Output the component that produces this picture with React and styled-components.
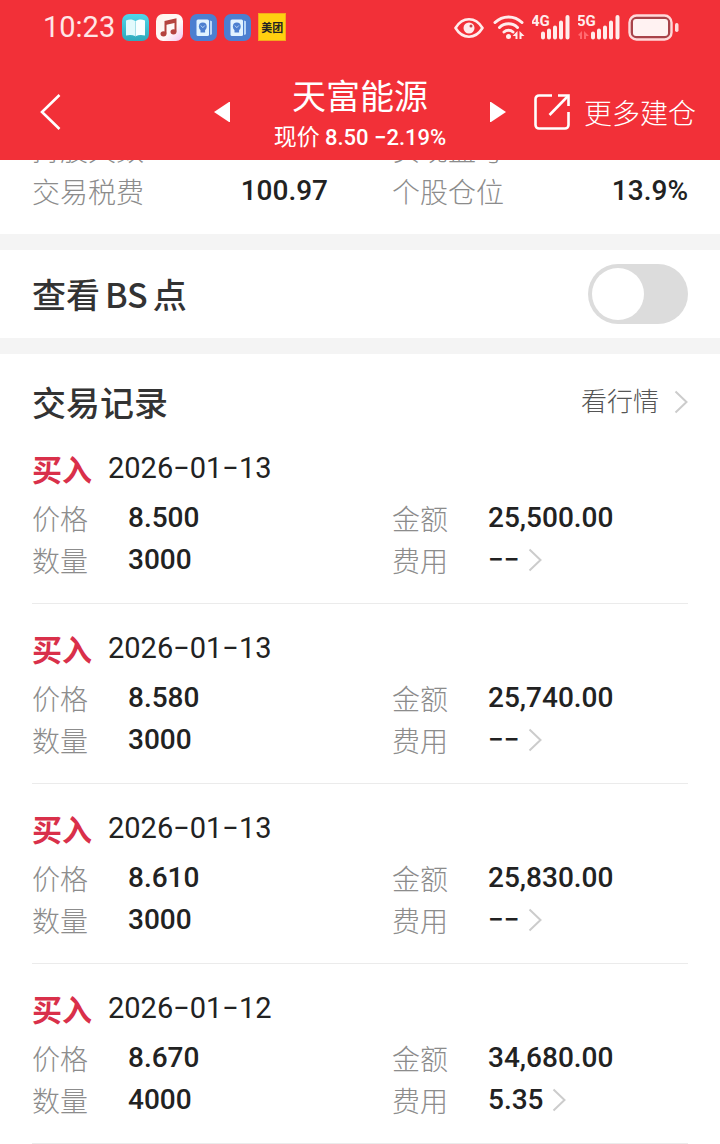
import React, { useState } from "react";
import styled, { createGlobalStyle } from "styled-components";

const records = [
  { id: 1, date: "2026−01−13", price: "8.500", count: "3000", amount: "25,500.00", fee: "−−" },
  { id: 2, date: "2026−01−13", price: "8.580", count: "3000", amount: "25,740.00", fee: "−−" },
  { id: 3, date: "2026−01−13", price: "8.610", count: "3000", amount: "25,830.00", fee: "−−" },
  { id: 4, date: "2026−01−12", price: "8.670", count: "4000", amount: "34,680.00", fee: "5.35" },
];

const BookIcon = () => (
  <svg width="27" height="27" viewBox="0 0 27 27" aria-hidden="true">
    <defs>
      <linearGradient id="book" x1="0" y1="0" x2="0" y2="1">
        <stop offset="0" stopColor="#4fd6ea" />
        <stop offset="1" stopColor="#2fa9bb" />
      </linearGradient>
    </defs>
    <rect width="27" height="27" rx="7" fill="url(#book)" />
    <path d="M4 6.500c3.500-1.400 6.800-1.200 9.500.8v15c-3-1.600-6-1.800-9.500-.8z" fill="#e2fafc" />
    <path d="M23 6.500c-3.500-1.400-6.800-1.200-9.500.8v15c3-1.600 6-1.800 9.500-.8z" fill="#f8ffff" />
    <path d="M13.500 7.300v15" stroke="#a5dfe8" strokeWidth="1" />
  </svg>
);

const MusicIcon = () => (
  <svg width="27" height="27" viewBox="0 0 27 27" aria-hidden="true">
    <defs>
      <linearGradient id="music" x1="0" y1="0" x2="1" y2="1">
        <stop offset="0" stopColor="#fff3ea" />
        <stop offset="0.6" stopColor="#fffafa" />
        <stop offset="1" stopColor="#f3c4ee" />
      </linearGradient>
    </defs>
    <rect width="27" height="27" rx="7" fill="url(#music)" />
    <path d="M9.500 19.500V7.800L19.500 5.500v12" fill="none" stroke="#b5443f" strokeWidth="2" />
    <path d="M9.500 7.500l10-2.300v3.600l-10 2.300z" fill="#b5443f" />
    <ellipse cx="7.500" cy="19.800" rx="3" ry="2.600" fill="#b5443f" />
    <ellipse cx="17.500" cy="17.800" rx="3" ry="2.600" fill="#b5443f" />
  </svg>
);

const CardIcon = () => (
  <svg width="27" height="27" viewBox="0 0 27 27" aria-hidden="true">
    <rect width="27" height="27" rx="7" fill="#4c7fd0" />
    <path d="M20 6.500l2 .8v13l-2 .7z" fill="#b8d6f8" />
    <rect x="6.500" y="5.500" width="12.500" height="16.500" rx="1.500" fill="#e2f3ff" />
    <circle cx="12.800" cy="12.500" r="3.900" fill="#4c7fd0" />
    <path d="M10.500 14.500h4.600v4h-4.600z" fill="#4c7fd0" />
    <path d="M10.800 11.500l2 2.200 2-2.200" fill="none" stroke="#b8d6f8" strokeWidth="1" />
  </svg>
);

const EyeIcon = () => (
  <svg width="32" height="26" viewBox="0 0 32 26" aria-hidden="true">
    <path
      d="M1.500 14C5 8.300 9.700 5.300 15 5.300S25 8.300 28.500 14C25 19.700 20.300 22.700 15 22.700S5 19.700 1.500 14z"
      fill="none"
      stroke="#ffecec"
      strokeWidth="2.600"
      strokeLinejoin="round"
    />
    <circle cx="15" cy="14" r="5.500" fill="#ffecec" />
    <circle cx="17" cy="12" r="1.500" fill="#c6434a" />
  </svg>
);

const WifiIcon = () => (
  <svg width="32" height="26" viewBox="0 0 32 26" aria-hidden="true">
    <g fill="none" stroke="#ffecec" strokeWidth="3" strokeLinecap="round">
      <path d="M2 8.500C9.500 1 21.500 1 29 8.500" />
      <path d="M6.500 13.500c5-5 13-5 18 0" />
      <path d="M11 18c2.500-2.300 6.500-2.300 9 0" />
    </g>
    <circle cx="15.500" cy="22.500" r="2.500" fill="#ffecec" />
    <path d="M24.500 17v8h-2v-3h-3zM26.500 17v8h2v-3h3z" fill="#ffecec" />
  </svg>
);

const SignalIcon = ({ label, idle }) => (
  <svg width={idle ? 43 : 39} height="28" viewBox={idle ? "0 0 43 28" : "0 0 39 28"} role="img" aria-label={label}>
    <text x="-1" y="13" fontFamily="Roboto, sans-serif" fontSize="15" fontWeight="700" fill="#ffecec">
      {label}
    </text>
    <g transform={idle ? "translate(4 0)" : undefined} stroke="#ffecec" strokeWidth="4" strokeLinecap="round">
      <path d="M11 20.500v4M17 17.500v7M23 14.500v10M29 9.500v15M35.500 4v20.500" />
    </g>
    {idle && <path d="M0 22l4-4v8h-2v-3zM6 18v8h2v-3h3z" fill="#ff6a70" />}
  </svg>
);

const BatteryIcon = () => (
  <svg width="51" height="27" viewBox="0 0 51 27" aria-hidden="true">
    <rect x="1.500" y="1.500" width="42" height="24" rx="7" fill="#a8434a" stroke="#ffd9da" strokeWidth="2.400" />
    <rect x="5" y="5" width="35" height="17" rx="3" fill="#fff2f2" />
    <rect x="47" y="9" width="3.500" height="9" rx="1.700" fill="#ffd9da" />
  </svg>
);

const BackIcon = () => (
  <svg width="21" height="36" viewBox="0 0 21 36" aria-hidden="true">
    <path d="M19.500 1L2 18l17.500 17" fill="none" stroke="#fff" strokeWidth="2.600" />
  </svg>
);

const Triangle = ({ flip }) => (
  <svg width="16" height="20" viewBox="0 0 16 20" aria-hidden="true">
    <path d={flip ? "M1 0L16 10 1 20H0V0z" : "M15 0L0 10l15 10h1V0z"} fill="#fff" />
  </svg>
);

const ShareIcon = () => (
  <svg width="36" height="36" viewBox="0 0 36 36" aria-hidden="true">
    <g fill="none" stroke="#fff" strokeWidth="2.600">
      <path d="M18 1.500H5A3.500 3.500 0 0 0 1.500 5v26A3.500 3.500 0 0 0 5 34.500h26a3.500 3.500 0 0 0 3.500-3.500V18" />
      <path d="M15.500 21L34 2" />
      <path d="M24 1.500h10.500V12" />
    </g>
  </svg>
);

const Chevron = () => (
  <svg width="14" height="24" viewBox="0 0 14 24" aria-hidden="true">
    <path d="M1.500 1.500L12.500 12 1.500 22.500" fill="none" stroke="#ccc" strokeWidth="2" />
  </svg>
);

const StatusBar = () => (
  <Status>
    <StatusGroup>
      <Time>10:23</Time>
      <BookIcon />
      <MusicIcon />
      <CardIcon />
      <CardIcon />
      <Meituan>美团</Meituan>
    </StatusGroup>
    <StatusGroup>
      <EyeIcon />
      <WifiIcon />
      <SignalIcon label="4G" />
      <SignalIcon label="5G" idle />
      <BatteryIcon />
    </StatusGroup>
  </Status>
);

const Header = () => (
  <Nav>
    <BackBtn aria-label="返回">
      <BackIcon />
    </BackBtn>
    <Switcher>
      <IconBtn aria-label="上一只">
        <Triangle />
      </IconBtn>
      <Stock>
        <StockName>天富能源</StockName>
        <StockPrice>
          现价 <span>8.50 −2.19%</span>
        </StockPrice>
      </Stock>
      <IconBtn aria-label="下一只">
        <Triangle flip />
      </IconBtn>
    </Switcher>
    <MoreBtn>
      <ShareIcon />
      更多建仓
    </MoreBtn>
  </Nav>
);

const Record = ({ item }) => (
  <Item>
    <ItemHead>
      <Side>买入</Side>
      <span>{item.date}</span>
    </ItemHead>
    <Pairs>
      <Pair>
        <Label>价格</Label>
        <Value>{item.price}</Value>
      </Pair>
      <Pair>
        <Label>金额</Label>
        <Value>{item.amount}</Value>
      </Pair>
      <Pair>
        <Label>数量</Label>
        <Value>{item.count}</Value>
      </Pair>
      <Pair>
        <Label>费用</Label>
        <Value>
          <FeeBtn>
            {item.fee}
            <Chevron />
          </FeeBtn>
        </Value>
      </Pair>
    </Pairs>
  </Item>
);

const App = () => {
  const [showBS, setShowBS] = useState(false);

  return (
    <>
      <GlobalStyle />
      <Top>
        <StatusBar />
        <Header />
      </Top>
      <main>
        <Stats>
          <Pairs>
            <Pair $spread>
              <Label>持股天数</Label>
            </Pair>
            <Pair $spread>
              <Label>实现盈亏</Label>
            </Pair>
            <Pair $spread>
              <Label>交易税费</Label>
              <Value>100.97</Value>
            </Pair>
            <Pair $spread>
              <Label>个股仓位</Label>
              <Value>13.9%</Value>
            </Pair>
          </Pairs>
        </Stats>
        <SwitchRow>
          <Title as="label" htmlFor="bs">
            查看<Latin>BS</Latin>点
          </Title>
          <Toggle
            id="bs"
            type="checkbox"
            role="switch"
            checked={showBS}
            onChange={() => setShowBS(!showBS)}
          />
        </SwitchRow>
        <Records>
          <RecordsHead>
            <Title>交易记录</Title>
            <QuoteLink href="#quote">
              看行情
              <Chevron />
            </QuoteLink>
          </RecordsHead>
          <List>
            {records.map((item) => (
              <Record key={item.id} item={item} />
            ))}
          </List>
        </Records>
      </main>
    </>
  );
};

const GlobalStyle = createGlobalStyle`
  * {
    box-sizing: border-box;
  }
  body {
    margin: 0;
    background: #fff;
    color: #222;
    font-family: Roboto, "Noto Sans CJK SC", sans-serif;
  }
  button {
    padding: 0;
    border: none;
    background: none;
    color: inherit;
    font: inherit;
    cursor: pointer;
  }
  svg {
    display: block;
    flex-shrink: 0;
  }
`;

const Top = styled.header`
  background: #f23038;
  color: #fff;
`;

const Status = styled.div`
  height: 54px;
  padding: 0 41px 0 43px;
  display: flex;
  align-items: center;
  justify-content: space-between;
`;

const StatusGroup = styled.div`
  display: flex;
  align-items: center;
  gap: 7px;
`;

const Time = styled.span`
  font-size: 29px;
  color: #ffe6e6;
`;

const Meituan = styled.span`
  width: 28px;
  height: 28px;
  display: flex;
  align-items: center;
  justify-content: center;
  background: #ffd010;
  border: 1px solid #f5a81c;
  color: #222;
  font-size: 11px;
  font-weight: 700;
`;

const Nav = styled.nav`
  height: 106px;
  padding-top: 10px;
  display: grid;
  grid-template-columns: 1fr 292px 1fr;
  align-items: center;
`;

const IconBtn = styled.button`
  display: flex;
`;

const BackBtn = styled(IconBtn)`
  && {
    padding-left: 40px;
  }
`;

const Switcher = styled.div`
  display: flex;
  align-items: center;
  justify-content: space-between;
`;

const Stock = styled.div`
  padding-top: 6px;
  text-align: center;
  white-space: nowrap;
  font-family: "Noto Sans CJK SC", sans-serif;
`;

const StockName = styled.h1`
  margin: 0;
  font-size: 34px;
  font-weight: 400;
  line-height: 42px;
`;

const StockPrice = styled.div`
  font-size: 23px;
  line-height: 38px;
  span {
    font-family: Roboto, sans-serif;
    font-size: 22px;
    font-weight: 500;
  }
`;

const MoreBtn = styled.button`
  && {
    padding-right: 24px;
    font-size: 28px;
    font-weight: 300;
  }
  display: flex;
  align-items: center;
  justify-content: flex-end;
  gap: 14px;
  white-space: nowrap;
`;

/* the row above is scrolled under the header */
const Stats = styled.section`
  height: 74px;
  padding: 0 32px 22px;
  display: flex;
  flex-direction: column;
  justify-content: flex-end;
  overflow: hidden;
`;

const Pairs = styled.dl`
  margin: 0;
  display: grid;
  grid-template-columns: 1fr 1fr;
  column-gap: 64px;
`;

const Pair = styled.div`
  display: flex;
  justify-content: ${(props) => (props.$spread ? "space-between" : "flex-start")};
  line-height: 42px;
`;

const Label = styled.dt`
  min-width: 96px;
  height: 42px;
  color: #8c8c8c;
  font-family: "Noto Sans CJK SC", sans-serif;
  font-size: 28px;
  font-weight: 300;
`;

const Value = styled.dd`
  margin: 0;
  height: 42px;
  font-size: 28px;
  font-weight: 500;
`;

const SwitchRow = styled.section`
  height: 120px;
  padding: 0 32px;
  border: solid #f4f4f4;
  border-width: 16px 0;
  display: flex;
  align-items: center;
  justify-content: space-between;
`;

const Title = styled.h2`
  margin: 0;
  color: #333;
  font-family: "Noto Sans CJK SC", sans-serif;
  font-size: 34px;
  font-weight: 500;
  line-height: 44px;
`;

const Latin = styled.span`
  margin: 0 5px;
`;

const Toggle = styled.input`
  appearance: none;
  width: 100px;
  height: 60px;
  margin: 0;
  padding: 4px;
  border-radius: 30px;
  background: ${(props) => (props.checked ? "#f23038" : "#dcdcdc")};
  display: flex;
  justify-content: ${(props) => (props.checked ? "flex-end" : "flex-start")};
  cursor: pointer;
  &::before {
    content: "";
    width: 52px;
    height: 52px;
    border-radius: 50%;
    background: #fff;
  }
`;

const Records = styled.section`
  padding: 0 32px;
`;

const RecordsHead = styled.div`
  padding-top: 26px;
  display: flex;
  align-items: center;
  justify-content: space-between;
`;

const QuoteLink = styled.a`
  display: flex;
  align-items: center;
  gap: 15px;
  color: #555;
  font-size: 26px;
  font-weight: 300;
  line-height: 40px;
  text-decoration: none;
`;

const List = styled.ul`
  margin: 0;
  padding: 0;
  list-style: none;
`;

const Item = styled.li`
  padding: 15px 0 22px;
  border-bottom: 1px solid #ebebeb;
`;

const ItemHead = styled.div`
  height: 58px;
  display: flex;
  align-items: center;
  gap: 16px;
  font-size: 29px;
`;

const Side = styled.span`
  color: #d9304a;
  font-size: 30px;
  font-weight: 700;
`;

const FeeBtn = styled.button`
  height: 42px;
  display: flex;
  align-items: center;
  gap: 8px;
`;

export default App;
